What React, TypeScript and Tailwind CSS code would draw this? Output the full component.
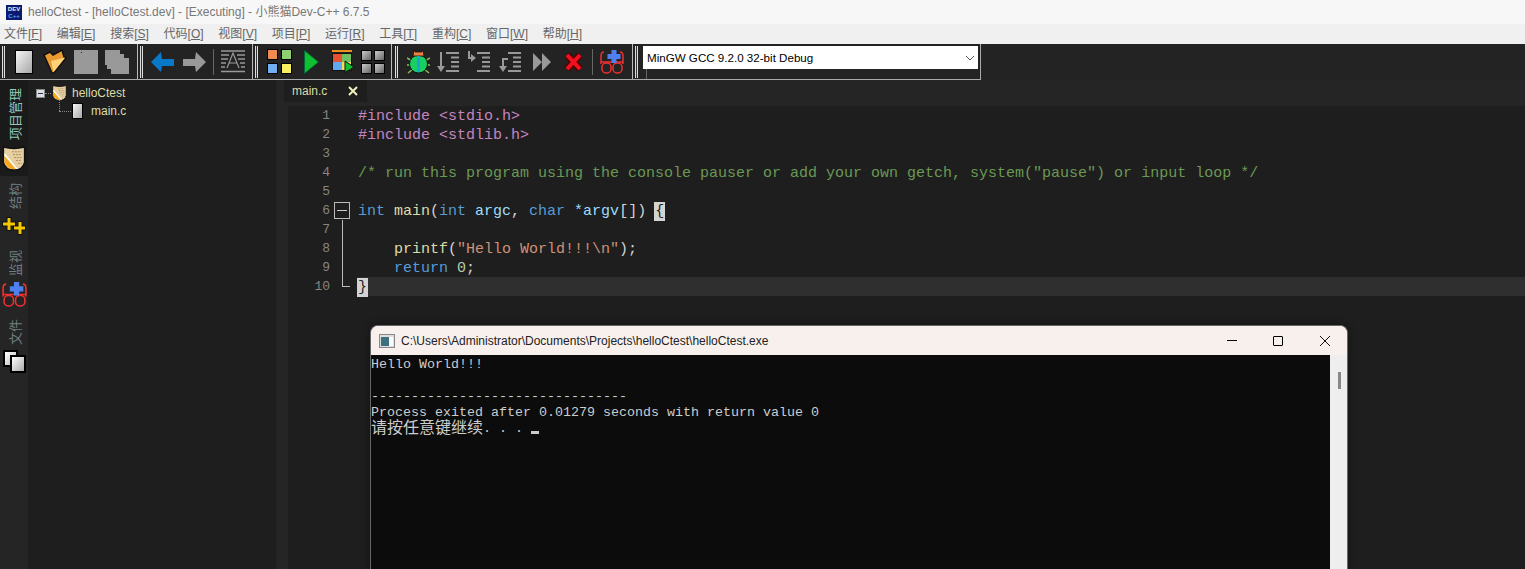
import type { ReactNode } from 'react'

const mono = "font-['Liberation_Mono',monospace]"

const menus = [
  ['文件', 'F'], ['编辑', 'E'], ['搜索', 'S'], ['代码', 'O'], ['视图', 'V'], ['项目', 'P'],
  ['运行', 'R'], ['工具', 'T'], ['重构', 'C'], ['窗口', 'W'], ['帮助', 'H'],
]

function Grip() {
  return <div className="w-[3px] h-[32px] border-x border-[#ddd] bg-[#333] ml-[2px] shrink-0" />
}

function Sep({ className }: { className: string }) {
  return <div className={`w-px h-[26px] bg-[#666] shrink-0 ${className}`} />
}

function Group({ width, children }: { width: string; children: ReactNode }) {
  return <div className={`flex items-center h-full border-r border-[#bbb] shrink-0 ${width}`}>{children}</div>
}

function FileIcon({ className }: { className: string }) {
  return <div className={`bg-linear-to-br from-[#f6f6f6] to-[#a8a8a8] border border-black shrink-0 ${className}`} />
}

function Shield({ w, h }: { w: number; h: number }) {
  return (
    <svg width={w} height={h} viewBox="0 0 24 26">
      <path d="M1 1 Q12 4 23 1 V17 Q21 25 12 25 Q3 25 1 17 Z" fill="#e6cfa0" stroke="#111" strokeWidth="1.5" />
      <path d="M2 10 L14 24 Q5 25 2 17 Z" fill="#f6a820" />
      <path d="M2 7 L16 24 L14 24 L2 10 Z" fill="#fff" />
      <path d="M10 6 H20 M11 9 H20 M12 12 H20 M14 15 H20 M16 18 H20" stroke="#a88a60" strokeDasharray="2 1" />
    </svg>
  )
}

function Glasses({ size }: { size: number }) {
  return (
    <svg width={size} height={size + 1} viewBox="0 0 24 25" fill="none">
      <path d="M1 7 Q1 3 4 3 M23 7 Q23 3 20 3 M1 7 V15 M23 7 V15 M1 13 H23" stroke="#f03030" strokeWidth="1.5" />
      <rect x="2" y="14" width="9" height="10" rx="4" stroke="#f03030" strokeWidth="1.5" />
      <rect x="13" y="14" width="9" height="10" rx="4" stroke="#f03030" strokeWidth="1.5" />
      <path d="M14 1 V14 M7.5 7.5 H20.5" stroke="#5080f0" strokeWidth="5" />
    </svg>
  )
}

function ListLines({ x }: { x: number }) {
  const d = `M${x} 2 H22 M${x + 5} 6.5 H22 M${x + 5} 11 H22 M${x + 5} 15.5 H22 M${x} 20 H22`
  return <path d={d} stroke="#999" strokeWidth="2" fill="none" />
}

function Toolbar() {
  return (
    <div className="h-[36px] bg-[#232323] shrink-0">
      <div className="flex h-[36px] w-[981px] border-b border-[#aaa]">
        <Group width="w-[138px]">
          <Grip />
          <FileIcon className="w-[18px] h-[24px] ml-[10px]" />
          <svg width="24" height="25" viewBox="0 0 24 25" className="ml-[10px]">
            <path d="M1 6 L7 3 L10 6 L19 1 L21 8 L23 9 L11 24 L9 24 Z" fill="#e89a30" stroke="#111" strokeWidth="1.5" />
            <path d="M8 12 L22 8.5 L10.5 23 Z" fill="#ffd27a" />
          </svg>
          <div className="relative w-[24px] h-[24px] bg-[#999] ml-[7px] shrink-0">
            <div className="absolute left-[7px] top-[2px] w-px h-px bg-[#222]" />
          </div>
          <svg width="24" height="24" viewBox="0 0 24 24" className="ml-[7px]">
            <path d="M0 0 H15 V4 H19 V8 H24 V24 H6 V19 H2 V15 H0 Z" fill="#999" />
          </svg>
        </Group>
        <Group width="w-[115px]">
          <Grip />
          <svg width="23" height="20" viewBox="0 0 23 20" className="ml-[8px]">
            <path d="M10 0 L0 10 L10 20 L11 14 H23 V7 H11 Z" fill="#0a78c8" />
          </svg>
          <svg width="23" height="20" viewBox="0 0 23 20" className="ml-[9px]">
            <path d="M13 0 L23 10 L13 20 L12 14 H0 V7 H12 Z" fill="#999" />
          </svg>
          <Sep className="ml-[7px]" />
          <svg width="24" height="23" viewBox="0 0 24 23" className="ml-[7px]" stroke="#999" fill="none">
            <path d="M0 1 H24 M0 5 H8 M16 5 H24 M0 9 H7 M17 9 H24 M0 13 H5 M19 13 H24 M0 17 H4 M20 17 H24 M0 21.5 H24" strokeWidth="1.6" />
            <path d="M6 18 L12 3 L18 18 M8 13 H16" strokeWidth="1.2" />
          </svg>
        </Group>
        <Group width="w-[139px]">
          <Grip />
          <div className="grid grid-cols-2 gap-[3px] ml-[9px] shrink-0">
            <div className="w-[11px] h-[11px] bg-[#f08a50] border border-black" />
            <div className="w-[11px] h-[11px] bg-[#8fd070] border border-black" />
            <div className="w-[11px] h-[11px] bg-[#70b0f0] border border-black" />
            <div className="w-[11px] h-[11px] bg-[#f8f060] border border-black" />
          </div>
          <svg width="15" height="24" viewBox="0 0 15 24" className="ml-[12px]">
            <path d="M0.5 0.5 L14.5 12 L0.5 23.5 Z" fill="#10c030" stroke="#063" />
          </svg>
          <svg width="23" height="23" viewBox="0 0 23 23" className="ml-[13px]">
            <rect x="0" y="0" width="20" height="2" fill="#e89020" />
            <rect x="0" y="3" width="20" height="18" fill="#111" />
            <rect x="1" y="4" width="9" height="8" fill="#e85030" />
            <rect x="10" y="4" width="9" height="8" fill="#70c060" />
            <rect x="1" y="12" width="9" height="8" fill="#60a8f0" />
            <rect x="10" y="12" width="9" height="8" fill="#f0e060" />
            <path d="M13 11 L22 17 L13 22.5 Z" fill="#10c030" stroke="#111" />
          </svg>
          <div className="grid grid-cols-2 gap-[2px] ml-[6px] shrink-0">
            <div className="w-[11px] h-[11px] bg-linear-to-br from-[#ccc] to-[#666] border border-black" />
            <div className="w-[11px] h-[11px] bg-linear-to-br from-[#ccc] to-[#666] border border-black" />
            <div className="w-[11px] h-[11px] bg-linear-to-br from-[#ccc] to-[#666] border border-black" />
            <div className="w-[11px] h-[11px] bg-linear-to-br from-[#ccc] to-[#666] border border-black" />
          </div>
        </Group>
        <Group width="w-[241px]">
          <div className="ml-[1px]"><Grip /></div>
          <svg width="23" height="25" viewBox="0 0 23 25" className="ml-[9px]">
            <path d="M0 9 L5 12 M23 9 L18 12 M0 16 H4 M23 16 H19 M1 24 L6 20 M22 24 L17 20" stroke="#8ac050" strokeWidth="1.5" fill="none" />
            <ellipse cx="11.5" cy="15" rx="9" ry="9" fill="#18d060" stroke="#111" />
            <path d="M7 1 L8 3 H15 L16 1 L17 7 H6 Z" fill="#f08040" stroke="#111" strokeWidth="0.8" />
            <rect x="10" y="7" width="3" height="16" fill="#20a0d8" />
          </svg>
          <svg width="22" height="22" viewBox="0 0 22 22" className="ml-[7px]">
            <ListLines x={9} />
            <path d="M4 1 V16" stroke="#999" strokeWidth="2" />
            <path d="M0 15 L4 21 L8 15 Z" fill="#999" />
          </svg>
          <svg width="22" height="22" viewBox="0 0 22 22" className="ml-[9px]">
            <ListLines x={9} />
            <path d="M1 0 V7 H4" stroke="#999" strokeWidth="2" fill="none" />
            <path d="M3 3 L8 7 L3 11 Z" fill="#999" />
          </svg>
          <svg width="22" height="22" viewBox="0 0 22 22" className="ml-[9px]">
            <ListLines x={9} />
            <path d="M9 8 H4 V16" stroke="#999" strokeWidth="2" fill="none" />
            <path d="M0 15 L4 21 L8 15 Z" fill="#999" />
          </svg>
          <svg width="18" height="20" viewBox="0 0 18 20" className="ml-[12px]" fill="#999">
            <path d="M0 1 L9 10 L0 19 Z M9 1 L18 10 L9 19 Z" />
          </svg>
          <svg width="21" height="22" viewBox="0 0 21 22" className="ml-[12px]">
            <path d="M4 4 L17 18 M17 4 L4 18" stroke="#500" strokeWidth="7" />
            <path d="M4 4 L17 18 M17 4 L4 18" stroke="#f01020" strokeWidth="4" />
          </svg>
          <Sep className="ml-[8px]" />
          <div className="ml-[7px] shrink-0"><Glasses size={24} /></div>
        </Group>
        <div className="relative flex items-start h-full flex-1 border-r border-[#aaa] pt-[2px]">
          <Grip />
          <div className="relative flex items-center bg-white w-[335px] h-[23px] ml-[5px] pl-[4px] text-[11.6px] text-black font-['Liberation_Sans',sans-serif]">
            MinGW GCC 9.2.0 32-bit Debug
            <svg width="10" height="6" viewBox="0 0 10 6" className="absolute right-[3px] top-[9px]" fill="none" stroke="#555">
              <path d="M1 1 L5 5 L9 1" />
            </svg>
          </div>
          <div className="absolute left-[13px] top-[25px] w-px h-[10px] bg-[#666]" />
        </div>
      </div>
    </div>
  )
}

function SideLabel({ className, children }: { className: string; children: ReactNode }) {
  return (
    <div className={`[writing-mode:vertical-rl] [text-orientation:sideways] rotate-180 text-[13px] leading-[14px] ml-[4px] ${className}`}>
      {children}
    </div>
  )
}

function SideBar() {
  return (
    <div className="w-[28px] shrink-0 bg-[#252526] flex flex-col items-center">
      <div className="w-full bg-[#1a1a1a] flex flex-col items-center pt-[8px] h-[96px]">
        <SideLabel className="text-[#8fc8b8]">项目管理</SideLabel>
        <div className="mt-[6px]"><Shield w={24} h={25} /></div>
      </div>
      <SideLabel className="text-[#6f7f80] mt-[7px]">结构</SideLabel>
      <svg width="24" height="18" viewBox="0 0 24 18" className="mt-[8px]">
        <path d="M7 0 V14 M0 7 H14 M18 4 V18 M11 11 H24" stroke="#111" strokeWidth="5" />
        <path d="M7 1 V13 M1 7 H13 M18 5 V17 M12 11 H23" stroke="#f4c800" strokeWidth="3" />
      </svg>
      <SideLabel className="text-[#6f7f80] mt-[15px]">监视</SideLabel>
      <div className="mt-[5px]"><Glasses size={25} /></div>
      <SideLabel className="text-[#6f7f80] mt-[12px]">文件</SideLabel>
      <div className="relative w-[24px] h-[24px] mt-[5px]">
        <div className="absolute left-[1px] top-0 w-[15px] h-[17px] bg-linear-to-br from-white to-[#bbb] border-2 border-black" />
        <div className="absolute left-[8px] top-[5px] w-[16px] h-[18px] bg-linear-to-br from-white to-[#aaa] border-2 border-black" />
      </div>
    </div>
  )
}

function ProjectTree() {
  return (
    <div className="relative w-[249px] shrink-0 bg-[#1e1e1e] text-[12px] text-[#dcdcaa] pt-[4px] border-r border-[#222]">
      <div className="flex items-center h-[18px] pl-[8px]">
        <div className="w-[9px] h-[9px] bg-[#ddd] border border-[#888] flex items-center justify-center">
          <div className="w-[5px] h-px bg-[#235]" />
        </div>
        <div className="w-[6px] border-t border-dotted border-[#888] mr-px" />
        <Shield w={15} h={16} />
        <span className="ml-[5px]">helloCtest</span>
      </div>
      <div className="absolute left-[31px] top-[20px] h-[11px] border-l border-dotted border-[#888]" />
      <div className="flex items-center h-[18px] pl-[31px]">
        <div className="w-[12px] border-t border-dotted border-[#888] mr-px" />
        <FileIcon className="w-[11px] h-[16px]" />
        <span className="ml-[8px]">main.c</span>
      </div>
    </div>
  )
}

const Code = ({ c, children }: { c: string; children: ReactNode }) => <span className={c}>{children}</span>

const Brace = ({ children }: { children: ReactNode }) => (
  <span className="inline-block w-[11px] h-[19px] -mx-px text-center bg-[#d4d4d4] text-[#222]">{children}</span>
)

const lines: ReactNode[] = [
  <Code c="text-[#c586c0]">#include &lt;stdio.h&gt;</Code>,
  <Code c="text-[#c586c0]">#include &lt;stdlib.h&gt;</Code>,
  '',
  <Code c="text-[#6a9955]">/* run this program using the console pauser or add your own getch, system("pause") or input loop */</Code>,
  '',
  <>
    <Code c="text-[#569cd6]">int </Code>
    <Code c="text-[#dcdcaa]">main</Code>
    <Code c="text-[#d4d4d4]">(</Code>
    <Code c="text-[#569cd6]">int </Code>
    <Code c="text-[#9cdcfe]">argc</Code>
    <Code c="text-[#d4d4d4]">, </Code>
    <Code c="text-[#569cd6]">char </Code>
    <Code c="text-[#9cdcfe]">*argv</Code>
    <Code c="text-[#d4d4d4]">[]) </Code>
    <Brace>{'{'}</Brace>
  </>,
  '',
  <>
    {'    '}
    <Code c="text-[#dcdcaa]">printf</Code>
    <Code c="text-[#d4d4d4]">(</Code>
    <Code c="text-[#ce9178]">"Hello World!!!\n"</Code>
    <Code c="text-[#d4d4d4]">);</Code>
  </>,
  <>
    {'    '}
    <Code c="text-[#569cd6]">return </Code>
    <Code c="text-[#b5cea8]">0</Code>
    <Code c="text-[#d4d4d4]">;</Code>
  </>,
  <Brace>{'}'}</Brace>,
]

function Editor() {
  return (
    <div className="flex-1 flex flex-col min-w-0 bg-[#252526]">
      <div className="h-[26px] pl-[7px] shrink-0">
        <div className="flex items-center w-[83px] h-[22px] bg-[#1e1e1e] pl-[8px] text-[12px] text-[#dcdcaa] font-['Liberation_Sans',sans-serif]">
          main.c
          <svg width="12" height="12" viewBox="0 0 12 12" className="ml-[20px]">
            <path d="M2 2 L10 10 M10 2 L2 10" stroke="#f0f0c0" strokeWidth="2" />
          </svg>
        </div>
      </div>
      <div className={`flex-1 ml-[11px] bg-[#1e1e1e] ${mono} text-[15px] leading-[19px] whitespace-pre`}>
        {lines.map((line, i) => (
          <div key={i} className="flex h-[19px]">
            <div className="w-[42px] text-right text-[13px] text-[#858585]">{i + 1}</div>
            <div className="relative w-[27px]">
              {i === 5 && (
                <div className="absolute left-[4px] top-px w-[16px] h-[17px] border border-[#bbb] after:absolute after:left-[2px] after:right-[2px] after:top-[7px] after:h-px after:bg-[#ccc]" />
              )}
              {i > 5 && i < 9 && <div className="absolute left-[12px] top-0 bottom-0 w-px bg-[#bbb]" />}
              {i === 9 && <div className="absolute left-[12px] top-0 h-[10px] w-[8px] border-l border-b border-[#bbb]" />}
            </div>
            <div className={`flex-1 pl-px ${i === 9 ? 'bg-[#2f2f2f]' : ''}`}>
              <div className="relative top-px">{line}</div>
            </div>
          </div>
        ))}
      </div>
    </div>
  )
}

function Console() {
  return (
    <div className="absolute left-[370px] top-[325px] w-[978px] h-[300px] rounded-t-[8px] overflow-hidden flex flex-col bg-[#f0f0f0] border-x border-t border-[#666] shadow-[0_0_8px_rgba(0,0,0,0.4)]">
      <div className="h-[29px] bg-[#f8f0ed] flex items-center shrink-0 font-['Liberation_Sans',sans-serif] text-[12px] text-[#222]">
        <svg width="16" height="14" viewBox="0 0 16 14" className="ml-[8px] mr-[6px]">
          <rect x="0.5" y="0.5" width="15" height="13" fill="#ddd" stroke="#888" />
          <rect x="2" y="3" width="8" height="9" fill="#3f7080" />
          <rect x="10" y="3" width="4" height="9" fill="#fff" />
        </svg>
        C:\Users\Administrator\Documents\Projects\helloCtest\helloCtest.exe
        <div className="ml-auto flex items-center">
          <div className="w-[10px] h-px bg-black mr-[36px]" />
          <div className="w-[10px] h-[10px] border border-black rounded-[1px] mr-[36px]" />
          <svg width="12" height="12" viewBox="0 0 12 12" className="mr-[16px]" stroke="#111">
            <path d="M1 1 L11 11 M11 1 L1 11" />
          </svg>
        </div>
      </div>
      <div className="flex flex-1">
        <div className={`flex-1 bg-[#0c0c0c] text-[#ccc] ${mono} text-[13.33px] leading-[16px] whitespace-pre`}>
          <div className="h-[16px] mt-[2px]">Hello World!!!</div>
          <div className="h-[16px]" />
          <div className="h-[16px]">--------------------------------</div>
          <div className="h-[16px]">Process exited after 0.01279 seconds with return value 0</div>
          <div className="h-[16px] flex items-center font-['Liberation_Mono','Noto_Sans_CJK_SC',monospace]">
            <span className="text-[16px]">请按任意键继续</span>. . . <div className="w-[8px] h-[3px] mt-[7px] bg-[#ccc]" />
          </div>
        </div>
        <div className="w-[17px] bg-[#eee] relative">
          <div className="absolute left-[8px] top-[17px] w-[3px] h-[17px] bg-[#888]" />
        </div>
      </div>
    </div>
  )
}

export default function App() {
  return (
    <div className="relative w-[1525px] h-[569px] overflow-hidden flex flex-col bg-[#1e1e1e] font-['Liberation_Sans','Noto_Sans_CJK_SC',sans-serif]">
      <div className="h-[24px] bg-[#f7f7f7] flex items-center text-[12px] text-[#777] shrink-0">
        <svg width="16" height="15" viewBox="0 0 16 15" className="ml-[6px] mr-[6px]">
          <rect width="16" height="15" fill="#0a1a70" />
          <text x="8" y="6" textAnchor="middle" fontSize="6" fontWeight="700" fill="#eee" fontFamily="Liberation Sans">DEV</text>
          <text x="8" y="13" textAnchor="middle" fontSize="6" fontWeight="700" fill="#60a0f0" fontFamily="Liberation Sans">C++</text>
        </svg>
        helloCtest - [helloCtest.dev] - [Executing] - 小熊猫Dev-C++ 6.7.5
      </div>
      <div className="h-[20px] bg-[#f0f0f0] flex items-center pl-[4px] gap-[14.7px] text-[12px] text-[#666] shrink-0">
        {menus.map(([name, key]) => (
          <span key={key}>{name}[<u>{key}</u>]</span>
        ))}
      </div>
      <Toolbar />
      <div className="flex flex-1 min-h-0">
        <SideBar />
        <ProjectTree />
        <Editor />
      </div>
      <Console />
    </div>
  )
}
